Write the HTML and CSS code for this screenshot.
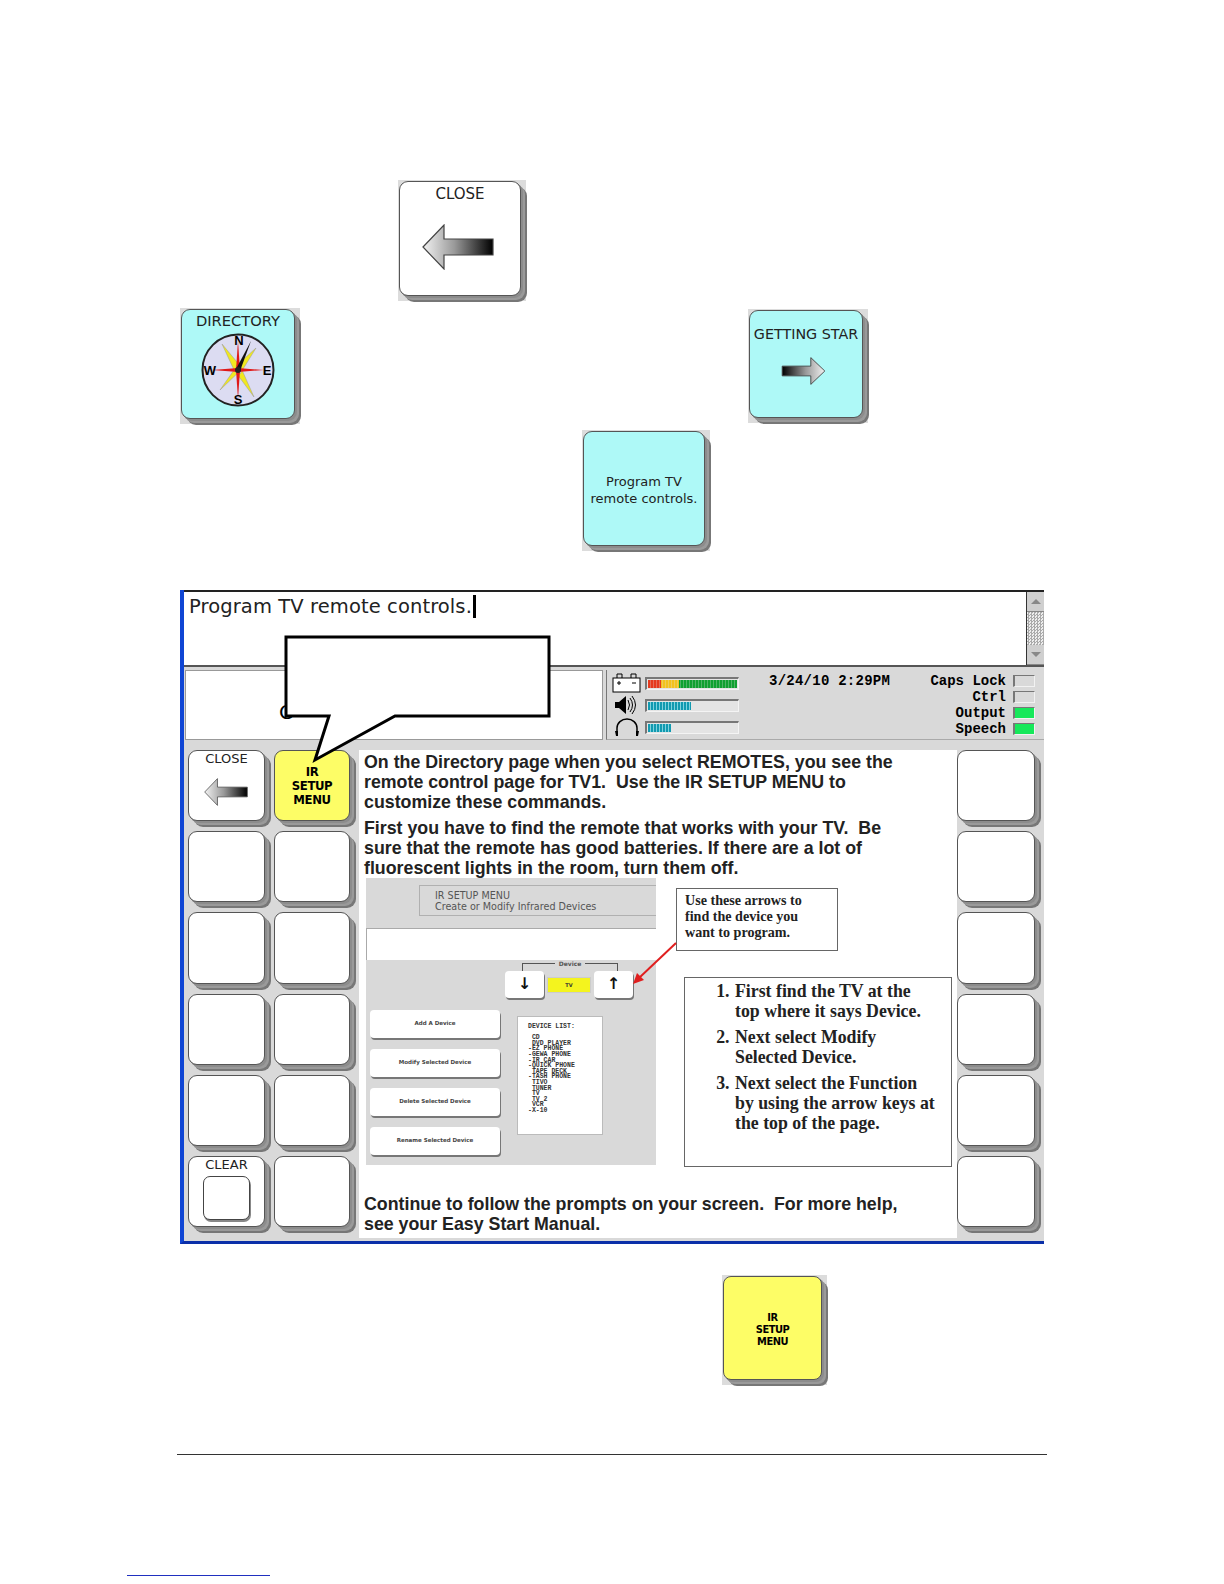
FILE: index.html
```html
<!DOCTYPE html>
<html lang="en">
<head>
    <meta charset="UTF-8">
    <meta name="viewport" content="width=device-width, initial-scale=1.0">
    <title>IR Setup Menu</title>
    <link rel="stylesheet" href="styles.css">
</head>
<body>
    <svg class="defs" width="0" height="0">
        <defs>
            <linearGradient id="fade-left" x1="0" x2="1" y1="0" y2="0">
                <stop offset="0" stop-color="#f2f2f2"/>
                <stop offset="0.45" stop-color="#999"/>
                <stop offset="1" stop-color="#000"/>
            </linearGradient>
            <linearGradient id="fade-right" x1="0" x2="1" y1="0" y2="0">
                <stop offset="0" stop-color="#000"/>
                <stop offset="0.55" stop-color="#999"/>
                <stop offset="1" stop-color="#f2f2f2"/>
            </linearGradient>
            <symbol id="arrow-left" viewBox="0 0 72 46">
                <path d="M1 23 L22 1 V15 H71 V31 H22 V45 Z" fill="url(#fade-left)" stroke="#444" stroke-width="1.2"/>
            </symbol>
            <symbol id="arrow-right" viewBox="0 0 72 46">
                <path d="M71 23 L48 1 V15 H1 V31 H48 V45 Z" fill="url(#fade-right)" stroke="#444" stroke-width="1.5"/>
            </symbol>
        </defs>
    </svg>

    <main class="page">
        <div class="row row-close">
            <div class="tile">
                <div class="key key-big white">
                    <span class="key-label">CLOSE</span>
                    <svg class="arrow-big" width="72" height="46"><use href="#arrow-left"/></svg>
                </div>
            </div>
        </div>

        <div class="row row-nav">
            <div class="tile">
                <div class="key key-dir cyan">
                    <span class="key-label">DIRECTORY</span>
                    <svg class="compass" width="76" height="76" viewBox="0 0 76 76">
                        <circle cx="38" cy="38" r="35.5" fill="#dcdcf2" stroke="#222" stroke-width="2"/>
                        <path d="M34 38 L22 12 L42 36 Z M36 34 L56 16 L40 42 Z M42 37 L20 58 L34 38 Z M34 38 L54 65 L42 38 Z" fill="#f0e820" stroke="#999" stroke-width=".5"/>
                        <path d="M36 38 L38 9 L40 38 L38 67 Z" fill="#e01818"/>
                        <path d="M38 36 L64 38 L38 40 L12 38 Z" fill="#e01818"/>
                        <path d="M36 37 L51 9 L40 39 Z" fill="#111"/>
                        <circle cx="38" cy="38" r="3" fill="#222"/>
                        <text class="compass-text" x="39" y="13" text-anchor="middle">N</text>
                        <text class="compass-text" x="38" y="72" text-anchor="middle">S</text>
                        <text class="compass-text" x="10" y="43" text-anchor="middle">W</text>
                        <text class="compass-text" x="67" y="43" text-anchor="middle">E</text>
                    </svg>
                </div>
            </div>
            <div class="tile tile-getting">
                <div class="key key-get cyan">
                    <span class="key-label">GETTING STAR</span>
                    <svg class="arrow-small" width="45" height="28"><use href="#arrow-right"/></svg>
                </div>
            </div>
        </div>

        <div class="row row-program">
            <div class="tile">
                <div class="key key-big cyan key-center">
                    <span class="key-label">Program TV<br>remote controls.</span>
                </div>
            </div>
        </div>

        <section class="panel">
            <div class="entry">
                <div class="entry-text">Program TV remote controls.<span class="cursor"></span></div>
                <div class="scrollbar">
                    <div class="scroll-btn"><span class="tri-up"></span></div>
                    <div class="scroll-track"></div>
                    <div class="scroll-btn"><span class="tri-down"></span></div>
                </div>
            </div>

            <div class="status-row">
                <div class="message">C</div>
                <div class="status">
                    <div class="meters">
                        <div class="meter">
                            <svg class="meter-icon" width="30" height="20" viewBox="0 0 30 20">
                                <rect x="1" y="5" width="27" height="14" fill="#fff" stroke="#000"/>
                                <path d="M5 5 V1 H10 V5 M19 5 V1 H24 V5 M5 10 H9 M7 8 V12 M20 10 H24" fill="none" stroke="#000"/>
                            </svg>
                            <div class="bar"><div class="fill fill-battery"></div></div>
                        </div>
                        <div class="meter">
                            <svg class="meter-icon" width="30" height="20" viewBox="0 0 30 20">
                                <path d="M3 7 H7 L14 1 V19 L7 13 H3 Z" fill="#000"/>
                                <path d="M16 5 Q19 10 16 15 M18 3 Q23 10 18 17 M20 1 Q27 10 20 19" fill="none" stroke="#000"/>
                            </svg>
                            <div class="bar"><div class="fill fill-teal" style="width:43px"></div></div>
                        </div>
                        <div class="meter">
                            <svg class="meter-icon" width="30" height="20" viewBox="0 0 30 20">
                                <path d="M5 14 V11 A10 9 0 0 1 25 11 V14" fill="none" stroke="#000" stroke-width="1.5"/>
                                <path d="M3 14 H6 V19 H4 Z M24 14 H27 L26 19 H24 Z" fill="#000"/>
                            </svg>
                            <div class="bar"><div class="fill fill-teal" style="width:23px"></div></div>
                        </div>
                    </div>
                    <div class="clock">3/24/10 2:29PM</div>
                    <div class="lights">
                        <div class="light"><span>Caps Lock</span><i class="lamp"></i></div>
                        <div class="light"><span>Ctrl</span><i class="lamp"></i></div>
                        <div class="light"><span>Output</span><i class="lamp on"></i></div>
                        <div class="light"><span>Speech</span><i class="lamp on"></i></div>
                    </div>
                </div>
            </div>

            <div class="board">
                <div class="keys-left">
                    <div class="key white key-close-small">
                        <span class="key-label">CLOSE</span>
                        <svg class="arrow-small" width="44" height="28"><use href="#arrow-left"/></svg>
                    </div>
                    <div class="key yellow key-center key-setup">IR<br>SETUP<br>MENU</div>
                    <div class="key white"></div>
                    <div class="key white"></div>
                    <div class="key white"></div>
                    <div class="key white"></div>
                    <div class="key white"></div>
                    <div class="key white"></div>
                    <div class="key white"></div>
                    <div class="key white"></div>
                    <div class="key white key-clear">
                        <span class="key-label">CLEAR</span>
                        <div class="clear-box"></div>
                    </div>
                    <div class="key white"></div>
                </div>

                <div class="content">
                    <p>On the Directory page when you select REMOTES, you see the<br>remote control page for TV1.&nbsp; Use the IR SETUP MENU to<br>customize these commands.</p>
                    <p>First you have to find the remote that works with your TV.&nbsp; Be<br>sure that the remote has good batteries. If there are a lot of<br>fluorescent lights in the room, turn them off.</p>

                    <div class="mid">
                        <div class="shot">
                            <div class="shot-head">IR SETUP MENU<br>Create or Modify Infrared Devices</div>
                            <div class="shot-band"></div>
                            <div class="device">
                                <div class="device-label"><span>Device</span></div>
                                <div class="device-row">
                                    <div class="shot-key">↓</div>
                                    <div class="device-name">TV</div>
                                    <div class="shot-key">↑</div>
                                </div>
                            </div>
                            <div class="shot-lower">
                                <div class="shot-btns">
                                    <div class="shot-btn">Add A Device</div>
                                    <div class="shot-btn">Modify Selected Device</div>
                                    <div class="shot-btn">Delete Selected Device</div>
                                    <div class="shot-btn">Rename Selected Device</div>
                                </div>
                                <div class="device-list">DEVICE LIST:<br><br>&nbsp;CD<br>&nbsp;DVD PLAYER<br>-EZ PHONE<br>-GEWA PHONE<br>-IR CAR<br>-QUICK PHONE<br>&nbsp;TAPE DECK<br>-TASH PHONE<br>&nbsp;TIVO<br>&nbsp;TUNER<br>&nbsp;TV<br>&nbsp;TV 2<br>&nbsp;VCR<br>-X-10</div>
                            </div>
                        </div>

                        <div class="notes">
                            <div class="note-small">Use these arrows to<br>find the device you<br>want to program.</div>
                            <ol class="note-list">
                                <li>First find the TV at the<br>top where it says Device.</li>
                                <li>Next select Modify<br>Selected Device.</li>
                                <li>Next select the Function<br>by using the arrow keys at<br>the top of the page.</li>
                            </ol>
                        </div>

                        <svg class="red-arrow" width="50" height="50" viewBox="0 0 50 50">
                            <path d="M46 3 L9 38" stroke="#e01f1f" stroke-width="2" fill="none"/>
                            <path d="M3 44 L7 33 L14 40 Z" fill="#e01f1f"/>
                        </svg>
                    </div>

                    <p class="closing">Continue to follow the prompts on your screen.&nbsp; For more help,<br>see your Easy Start Manual.</p>
                </div>

                <div class="keys-right">
                    <div class="key white"></div>
                    <div class="key white"></div>
                    <div class="key white"></div>
                    <div class="key white"></div>
                    <div class="key white"></div>
                    <div class="key white"></div>
                </div>
            </div>

            <svg class="callout" width="272" height="134" viewBox="0 0 272 134">
                <path d="M4 3 H267 V82 H113 L33 126 L47 82 H4 Z" fill="#fff" stroke="#000" stroke-width="3"/>
            </svg>
        </section>

        <div class="row row-setup">
            <div class="tile tile-setup">
                <div class="key key-setup-big yellow key-center">IR<br>SETUP<br>MENU</div>
            </div>
        </div>

        <hr class="rule">
        <div class="footnote-line"></div>
    </main>
</body>
</html>
```

FILE: styles.css
```css
body { margin: 0; background: #fff; font-family: "DejaVu Sans", sans-serif; color: #000; }
.defs { position: absolute; }
.page { width: 1224px; height: 1584px; padding-top: 180px; box-sizing: border-box; overflow: hidden; }

.row { display: flex; }
.row-close { padding-left: 398px; }
.row-nav { margin-top: 7px; padding-left: 180px; align-items: flex-start; }
.tile-getting { margin-left: 448px; margin-top: 1px; }
.row-program { margin-top: 6px; padding-left: 582px; }
.row-setup { margin-top: 31px; padding-left: 722px; }

/* keys */
.tile { background: #dcdcdc; padding: 1px 5px 5px 1px; }
.key {
    box-sizing: border-box;
    border: 1px solid #555;
    border-radius: 9px;
    box-shadow: 2px 2px 0 #8c8c8c, 4px 4px 0 #9a9a9a, 6px 6px 0 #777;
    display: flex;
    flex-direction: column;
    align-items: center;
    text-align: center;
}
.white { background: #fff; }
.cyan { background: #aef9f7; }
.yellow { background: #fdfd66; }
.key-center { justify-content: center; }
.key-label { font-size: 15px; line-height: 17px; color: #222; }

.key-big { width: 122px; height: 115px; padding-top: 4px; }
.key-big.key-center { padding-top: 2px; }
.key-dir { width: 114px; height: 110px; padding-top: 2px; }
.key-dir .key-label { font-size: 14.7px; }
.key-get { width: 114px; height: 108px; padding-top: 15px; }
.key-get .key-label { font-size: 14.3px; white-space: nowrap; }
.key-setup-big { width: 99px; height: 104px; padding-top: 4px; font: bold 11px/12px "DejaVu Sans Condensed", "DejaVu Sans", sans-serif; letter-spacing: -0.5px; border-radius: 8px; }
.arrow-big { margin-top: 21px; margin-left: -5px; }
.compass { margin-top: 3px; }
.compass-text { font: bold 13px "Liberation Sans", sans-serif; }
.arrow-small { margin-top: 14px; margin-left: -6px; }
.key-center .key-label { font-size: 13px; line-height: 17px; }

/* main screen */
.panel {
    position: relative;
    box-sizing: border-box;
    width: 864px;
    height: 654px;
    margin: 39px 0 0 180px;
    border-left: 4px solid #0f45d4;
    border-bottom: 3px solid #0a2fa8;
    background: #d9d9d9;
}
.entry { display: flex; height: 75px; box-sizing: border-box; border-top: 2px solid #222; background: #fff; }
.entry-text { flex: 1; padding: 3px 0 0 5px; font-size: 19.5px; line-height: 24px; letter-spacing: 0.1px; color: #222; display: flex; align-items: flex-start; border-right: 1px solid #333; }
.cursor { width: 3px; height: 23px; background: #000; margin-left: 1px; }
.scrollbar { width: 17px; display: flex; flex-direction: column; background: #d0d0d0; }
.scroll-btn { height: 19px; background: #cfcfcf; display: flex; align-items: center; justify-content: center; border-bottom: 1px solid #888; }
.scroll-track { flex: 1; background: repeating-conic-gradient(#aaa 0 25%, #eee 0 50%) 0 0 / 3px 3px; }
.tri-up { border: 5px solid transparent; border-top: 0; border-bottom: 5px solid #888; }
.tri-down { border: 5px solid transparent; border-bottom: 0; border-top: 5px solid #888; }

.status-row { display: flex; height: 77px; box-sizing: border-box; padding: 3px 0 2px 1px; gap: 3px; border-top: 2px solid #555; }
.message { width: 418px; box-sizing: border-box; background: #fff; border: 1px solid #999; padding: 29px 0 0 93px; font-size: 20px; line-height: 24px; }
.status { flex: 1; display: grid; grid-template-columns: 157px 152px 1fr; background: #d9d9d9; border-bottom: 1px solid #aaa; border-left: 1px solid #777; padding: 3px 9px 0 5px; font: bold 14px "Liberation Mono", monospace; }
.meters { display: flex; flex-direction: column; gap: 2px; }
.meter { display: flex; align-items: center; gap: 3px; height: 20px; }
.bar { width: 94px; height: 13px; box-sizing: border-box; background: #e4e4e4; border: 1px solid #f4f4f4; border-top: 2px solid #777; border-left: 2px solid #777; padding: 1px; }
.fill { height: 100%; }
.fill-battery { background: linear-gradient(90deg, #e53a1e 0 13px, #f2c21e 13px 31px, #10a030 31px 88px); mask: repeating-linear-gradient(90deg, #000 0 2px, rgba(0,0,0,.7) 2px 3px); }
.fill-teal { background: repeating-linear-gradient(90deg, #129ab0 0 2px, #7fd2de 2px 3px); }
.clock { letter-spacing: 0.25px; line-height: 16px; }
.lights { display: flex; flex-direction: column; align-items: flex-end; }
.light { display: flex; align-items: center; justify-content: flex-end; gap: 7px; height: 16px; white-space: nowrap; }
.lamp { width: 22px; height: 12px; box-sizing: border-box; background: #d9d9d9; border: 1px solid #f2f2f2; border-top-color: #777; border-left: 2px solid #777; }
.lamp.on { background: #16e85a; }

.board { display: grid; grid-template-columns: 175px 598px 87px; height: 499px; }
.keys-left { display: grid; grid-template-columns: 77px 76px; grid-auto-rows: 71.2px; column-gap: 9px; row-gap: 10px; padding: 8px 0 0 4px; }
.keys-right { display: grid; grid-auto-rows: 71.2px; row-gap: 10px; grid-template-columns: 78px; padding-top: 8px; }
.key-close-small { padding-top: 0; }
.key-close-small .arrow-small { margin-top: 12px; margin-left: -1px; }
.key-close-small .key-label, .key-clear .key-label { font-size: 13px; line-height: 15px; }
.key-setup { font: bold 13px/14px "DejaVu Sans Condensed", "DejaVu Sans", sans-serif; letter-spacing: -0.4px; }
.key-clear { padding-top: 0; }
.clear-box { width: 45px; height: 42px; margin-top: 4px; background: #fff; border: 1px solid #444; border-radius: 7px; box-shadow: 1px 2px 0 #888; }

.content { background: #fff; margin: 8px 0 3px; padding: 2px 0 0 5px; font: bold 17.8px/20px "Liberation Sans", sans-serif; color: #222; white-space: nowrap; }
.content p { margin: 0 0 6px; }
.content .closing { margin: 30px 0 0; line-height: 19.5px; }

.mid { position: relative; display: flex; height: 287px; margin-top: -6px; padding-left: 2px; }
.shot { width: 290px; height: 287px; box-sizing: border-box; padding-top: 7px; background: #d9d9d9; color: #555; font-family: "DejaVu Sans", sans-serif; font-weight: normal; }
.shot-head { height: 31px; box-sizing: border-box; margin-left: 53px; padding: 4px 0 0 15px; border: 1px solid #b0b0b0; border-right: 0; font-size: 9.6px; line-height: 11px; }
.shot-band { height: 31px; margin-top: 12px; background: #fff; border-top: 1px solid #aaa; border-left: 1px solid #aaa; }
.device { margin: 3px 0 0 139px; width: 130px; }
.device-label { height: 7px; margin: 0 17px; border: 1px solid #555; border-bottom: 0; text-align: center; font-size: 6px; line-height: 0; font-weight: bold; }
.device-label span { background: #d9d9d9; padding: 0 4px; }
.device-row { display: flex; gap: 3px; align-items: center; }
.shot-key { width: 39px; height: 27px; box-sizing: border-box; background: #fff; border-radius: 4px; box-shadow: 1px 2px 0 #777; color: #111; text-align: center; font: bold 16px/25px "DejaVu Sans", sans-serif; }
.device-name { width: 44px; height: 16px; background: #f4f41e; border: 1px solid #ccc; box-sizing: border-box; text-align: center; font: bold 5px/14px "DejaVu Sans", sans-serif; color: #333; }
.shot-lower { display: grid; grid-template-columns: 130px 86px; column-gap: 17px; margin: 12px 0 0 4px; }
.shot-btns { display: flex; flex-direction: column; gap: 11px; }
.shot-btn { height: 28px; box-sizing: border-box; background: #fff; border-radius: 4px; box-shadow: 1px 2px 0 #777; text-align: center; font: bold 5.5px/26px "DejaVu Sans", sans-serif; color: #444; }
.device-list { height: 119px; margin-top: 6px; box-sizing: border-box; padding: 7px 0 0 10px; background: #fff; border: 1px solid #bbb; font: bold 6.5px/5.6px "Liberation Mono", monospace; color: #333; }

.notes { font-family: "Liberation Serif", serif; color: #222; }
.note-small { width: 162px; height: 63px; box-sizing: border-box; margin: 10px 0 0 20px; padding: 3px 0 0 8px; border: 1px solid #666; background: #fff; font-size: 14.1px; line-height: 16px; }
.note-list { width: 268px; height: 190px; box-sizing: border-box; margin: 26px 0 0 28px; padding: 3px 0 0 49px; border: 1px solid #666; font-size: 17.8px; line-height: 20px; }
.note-list li { margin-bottom: 6px; padding-left: 1px; }
.red-arrow { position: absolute; left: 266px; top: 62px; }

.callout { position: absolute; left: 98px; top: 44px; }

.rule { margin: 69px 0 0 177px; width: 870px; height: 1px; border: 0; background: #333; }
.footnote-line { margin: 120px 0 0 127px; width: 143px; height: 1px; background: #2030c0; }
```
